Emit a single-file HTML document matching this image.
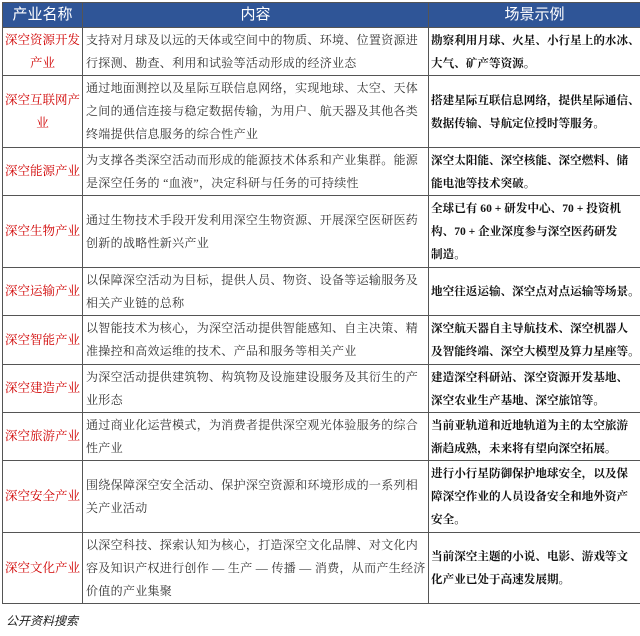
<!DOCTYPE html>
<html><head><meta charset="utf-8"><style>
body{margin:0;width:640px;height:636px;background:#fff;font-family:"Liberation Serif","Noto Serif CJK SC",serif;overflow:hidden;position:relative}
table{position:absolute;left:2px;top:2px;border-collapse:collapse;width:638px;table-layout:fixed}
td,th{border:1px solid #555;padding:0 0 0 3px;font-size:12px;line-height:23px;color:#333;vertical-align:middle;font-weight:normal;white-space:nowrap;overflow:hidden}
th{background:#2f5597;color:#fff;font-family:"Liberation Sans","Noto Sans CJK SC",sans-serif;font-size:15px;padding:0;line-height:20px}
td.n{color:#d00000;text-align:center;font-size:12.5px;padding:0}
td.c{letter-spacing:0.3px}
td.s{color:#111;font-weight:bold;font-size:11.6px;padding-left:2px}
.cap{position:absolute;left:6px;top:612px;font-size:12px;font-style:italic;color:#222;font-family:"Liberation Sans","Noto Sans CJK SC",sans-serif}
</style></head><body>
<table>
<colgroup><col style="width:80px"><col style="width:346px"><col style="width:212px"></colgroup>
<tr style="height:25px"><th>产业名称</th><th>内容</th><th>场景示例</th></tr>
<tr style="height:48px"><td class="n">深空资源开发<br>产业</td><td class="c">支持对月球及以远的天体或空间中的物质、环境、位置资源进<br>行探测、勘查、利用和试验等活动形成的经济业态</td><td class="s">勘察利用月球、火星、小行星上的水冰、<br>大气、矿产等资源。</td></tr>
<tr style="height:72px"><td class="n">深空互联网产<br>业</td><td class="c">通过地面测控以及星际互联信息网络，实现地球、太空、天体<br>之间的通信连接与稳定数据传输，为用户、航天器及其他各类<br>终端提供信息服务的综合性产业</td><td class="s">搭建星际互联信息网络，提供星际通信、<br>数据传输、导航定位授时等服务。</td></tr>
<tr style="height:48px"><td class="n">深空能源产业</td><td class="c">为支撑各类深空活动而形成的能源技术体系和产业集群。能源<br>是深空任务的 “血液”，决定科研与任务的可持续性</td><td class="s">深空太阳能、深空核能、深空燃料、储<br>能电池等技术突破。</td></tr>
<tr style="height:72px"><td class="n">深空生物产业</td><td class="c">通过生物技术手段开发利用深空生物资源、开展深空医研医药<br>创新的战略性新兴产业</td><td class="s">全球已有 60 + 研发中心、70 + 投资机<br>构、70 + 企业深度参与深空医药研发<br>制造。</td></tr>
<tr style="height:48px"><td class="n">深空运输产业</td><td class="c">以保障深空活动为目标，提供人员、物资、设备等运输服务及<br>相关产业链的总称</td><td class="s">地空往返运输、深空点对点运输等场景。</td></tr>
<tr style="height:49px"><td class="n">深空智能产业</td><td class="c">以智能技术为核心，为深空活动提供智能感知、自主决策、精<br>准操控和高效运维的技术、产品和服务等相关产业</td><td class="s">深空航天器自主导航技术、深空机器人<br>及智能终端、深空大模型及算力星座等。</td></tr>
<tr style="height:48px"><td class="n">深空建造产业</td><td class="c">为深空活动提供建筑物、构筑物及设施建设服务及其衍生的产<br>业形态</td><td class="s">建造深空科研站、深空资源开发基地、<br>深空农业生产基地、深空旅馆等。</td></tr>
<tr style="height:48px"><td class="n">深空旅游产业</td><td class="c">通过商业化运营模式，为消费者提供深空观光体验服务的综合<br>性产业</td><td class="s">当前亚轨道和近地轨道为主的太空旅游<br>渐趋成熟，未来将有望向深空拓展。</td></tr>
<tr style="height:72px"><td class="n">深空安全产业</td><td class="c">围绕保障深空安全活动、保护深空资源和环境形成的一系列相<br>关产业活动</td><td class="s">进行小行星防御保护地球安全，以及保<br>障深空作业的人员设备安全和地外资产<br>安全。</td></tr>
<tr style="height:71px"><td class="n">深空文化产业</td><td class="c">以深空科技、探索认知为核心，打造深空文化品牌、对文化内<br>容及知识产权进行创作 — 生产 — 传播 — 消费，从而产生经济<br>价值的产业集聚</td><td class="s">当前深空主题的小说、电影、游戏等文<br>化产业已处于高速发展期。</td></tr>
</table>
<div class="cap">公开资料搜索</div>
</body></html>
